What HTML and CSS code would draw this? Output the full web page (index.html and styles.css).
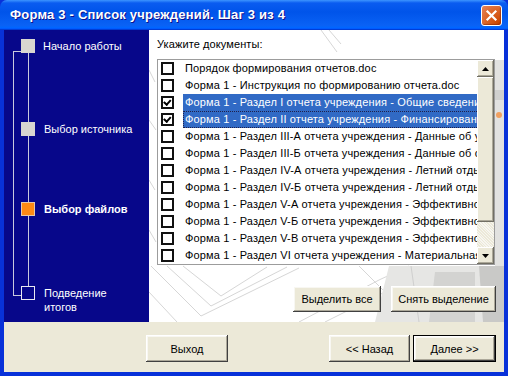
FILE: index.html
```html
<!DOCTYPE html>
<html lang="ru">
<head>
<meta charset="utf-8">
<title>Форма 3</title>
<link rel="stylesheet" href="styles.css">
</head>
<body>
<div class="window">
  <div class="titlebar">
    <span class="title">Форма 3 - Список учреждений. Шаг 3 из 4</span>
    <button class="close" aria-label="Закрыть">
      <svg width="13" height="13" viewBox="0 0 13 13"><path d="M2.5 2.5 L10.5 10.5 M10.5 2.5 L2.5 10.5" stroke="#fff" stroke-width="2.2" stroke-linecap="square"/></svg>
    </button>
  </div>
  <div class="frame">
    <div class="main">
      <aside class="steps">
        <svg class="rails" width="145" height="292" viewBox="0 0 145 292">
          <path d="M24.5 22 V262 M9.5 21.5 V265.5 M9 21.5 H17 M9 265.5 H17" stroke="#c9c9dd" stroke-width="1" fill="none"/>
        </svg>
        <div class="step s1"><span class="box done"></span><span class="label">Начало работы</span></div>
        <div class="step s2"><span class="box done"></span><span class="label">Выбор источника</span></div>
        <div class="step s3"><span class="box current"></span><span class="label bold">Выбор файлов</span></div>
        <div class="step s4"><span class="box todo"></span><span class="label">Подведение<br>итогов</span></div>
      </aside>
      <section class="content">
        <svg class="backdrop" width="355" height="292" viewBox="0 0 355 292">
          <g stroke="#d6d6d6" stroke-width="1" fill="none">
            <path d="M172 0 L188 22"/>
            <path d="M180 0 L192 14"/>
            <path d="M0 40 L6 52 M0 90 L7 100 M0 150 L6 160 M0 200 L7 212"/>
            <path d="M2 236 L52 286 L150 238"/>
            <path d="M18 236 L62 276 L138 237"/>
            <path d="M34 236 L72 266 L118 237"/>
            <path d="M0 262 L28 292"/>
            <path d="M150 292 L230 250 L260 236"/>
            <path d="M176 292 L236 262"/>
            <path d="M210 236 L236 262"/>
          </g>
          <path d="M240 236 H355 V292 H226 Z" fill="#e6e6e4"/>
          <path d="M262 236 L270 292" stroke="#cfcfcf" fill="none"/>
          <path d="M286 242 H326 V292 H280 Z" fill="#d3d3d1"/>
          <path d="M330 236 H355 V292 H334 Z" fill="#c9c9c7"/>
          <path d="M346 30 H355 V236 H346 Z" fill="#e2e2e0"/>
          <path d="M346 60 H355 V70 H346 Z" fill="#d0d0ce"/>
          <circle cx="350" cy="85" r="3" fill="#f0a060"/>
        </svg>
        <div class="prompt">Укажите документы:</div>
        <div class="listbox">
          <div class="items">
            <div class="row"><span class="cb"></span><span class="text">Порядок формирования отчетов.doc</span></div>
            <div class="row"><span class="cb"></span><span class="text">Форма 1 - Инструкция по формированию отчета.doc</span></div>
            <div class="row selected"><span class="cb checked"></span><span class="text">Форма 1 - Раздел I отчета учреждения - Общие сведения</span></div>
            <div class="row selected focus"><span class="cb checked"></span><span class="text">Форма 1 - Раздел II отчета учреждения - Финансирование</span></div>
            <div class="row"><span class="cb"></span><span class="text">Форма 1 - Раздел III-А отчета учреждения - Данные об учреждении</span></div>
            <div class="row"><span class="cb"></span><span class="text">Форма 1 - Раздел III-Б отчета учреждения - Данные об отделениях</span></div>
            <div class="row"><span class="cb"></span><span class="text">Форма 1 - Раздел IV-А отчета учреждения - Летний отдых</span></div>
            <div class="row"><span class="cb"></span><span class="text">Форма 1 - Раздел IV-Б отчета учреждения - Летний отдых</span></div>
            <div class="row"><span class="cb"></span><span class="text">Форма 1 - Раздел V-А отчета учреждения - Эффективность</span></div>
            <div class="row"><span class="cb"></span><span class="text">Форма 1 - Раздел V-Б отчета учреждения - Эффективность</span></div>
            <div class="row"><span class="cb"></span><span class="text">Форма 1 - Раздел V-В отчета учреждения - Эффективность</span></div>
            <div class="row"><span class="cb"></span><span class="text">Форма 1 - Раздел VI отчета учреждения - Материальная база</span></div>
          </div>
          <div class="scrollbar">
            <div class="sb-btn"><svg width="7" height="4" viewBox="0 0 7 4"><path d="M3.5 0 L7 4 H0 Z" fill="#000"/></svg></div>
            <div class="sb-thumb"></div>
            <div class="sb-track"></div>
            <div class="sb-btn"><svg width="7" height="4" viewBox="0 0 7 4"><path d="M0 0 H7 L3.5 4 Z" fill="#000"/></svg></div>
          </div>
        </div>
        <div class="sel-buttons">
          <button class="btn w88">Выделить все</button>
          <button class="btn w105">Снять выделение</button>
        </div>
      </section>
    </div>
    <div class="footer">
      <button class="btn w82">Выход</button>
      <div class="nav">
        <button class="btn w81">&lt;&lt; Назад</button>
        <button class="btn w83 default">Далее &gt;&gt;</button>
      </div>
    </div>
  </div>
</div>
</body>
</html>
```

FILE: styles.css
```css
* { box-sizing: border-box; }
html, body { margin: 0; padding: 0; background: #fff; }
body { font-family: "Liberation Sans", Arial, sans-serif; font-size: 11px; color: #000; }

.window {
  width: 508px;
  height: 376px;
  display: flex;
  flex-direction: column;
  background: #0831d9;
}

.titlebar {
  height: 30px;
  flex: none;
  display: flex;
  align-items: center;
  justify-content: space-between;
  padding: 0 6px 0 10px;
  border-radius: 7px 7px 0 0;
  background: linear-gradient(180deg, #3d95ff 0%, #0a5cf0 10%, #0054ea 40%, #0a62f5 85%, #0066ff 92%, #005bff 95%, #003dd7 96%, #003dd7 100%);
}
.title {
  color: #fff;
  font-weight: bold;
  font-size: 13px;
  letter-spacing: 0.2px;
  text-shadow: 1px 1px #0f1089;
  padding-bottom: 1px;
}
.close {
  width: 21px;
  height: 21px;
  padding: 0;
  border: 1px solid #fff;
  border-radius: 3px;
  display: flex;
  align-items: center;
  justify-content: center;
  background: radial-gradient(circle at 90% 90%, #cc4600 0%, #dc6527 55%, #e5845d 100%);
  box-shadow: inset -1px -1px 1px rgba(120,30,0,0.5);
}

.frame {
  flex: 1;
  display: flex;
  flex-direction: column;
  margin: 0 4px 4px 4px;
  background: #ece9d8;
}

.main {
  height: 292px;
  display: flex;
}

.steps {
  width: 145px;
  flex: none;
  background: #07078a;
  position: relative;
  padding-top: 9px;
  display: flex;
  flex-direction: column;
}
.rails { position: absolute; left: 0; top: 0; }
.step {
  position: relative;
  display: flex;
  align-items: flex-start;
  padding-left: 17px;
  color: #fff;
  line-height: 14px;
}
.s2 { margin-top: 69px; }
.s3 { margin-top: 66px; }
.s4 { margin-top: 70px; }
.box {
  width: 14px;
  height: 14px;
  flex: none;
}
.box.done { background: #d8d6d0; }
.box.current { background: #ff8a14; border: 1px solid #e8c8a8; }
.box.todo { background: #07078a; border: 1px solid #e8e8f0; }
.label { margin-left: 9px; white-space: nowrap; }
.label.bold { font-weight: bold; }
.s1 .label { margin-left: 8px; }

.content {
  flex: 1;
  background: #fff;
  position: relative;
  padding: 8px 8px 0 8px;
  display: flex;
  flex-direction: column;
}
.backdrop { position: absolute; left: 0; top: 0; }
.prompt {
  position: relative;
  line-height: 13px;
  height: 13px;
  margin-bottom: 8px;
  letter-spacing: 0.1px;
}
.listbox {
  position: relative;
  width: 338px;
  height: 206px;
  border: 1px solid #9c9c9c;
  background: #fff;
  display: flex;
}
.items {
  flex: 1;
  overflow: hidden;
}
.row {
  height: 17px;
  display: flex;
  align-items: center;
  padding-left: 3px;
  white-space: nowrap;
}
.cb {
  width: 13px;
  height: 13px;
  flex: none;
  border: 2px solid #111;
  background: #fff;
  position: relative;
}
.cb.checked::after {
  content: "";
  position: absolute;
  width: 5px;
  height: 3px;
  border-left: 2px solid #000;
  border-bottom: 2px solid #000;
  transform: rotate(-48deg);
  transform-origin: 30% 70%;
  top: 2px;
  left: 2px;
}
.text {
  margin-left: 9px;
  padding-left: 2px;
  height: 17px;
  line-height: 17px;
  flex: 1;
  letter-spacing: 0.15px;
}
.row.selected .text { background: #316ac5; color: #fff; }
.row.focus .text { outline: 1px dotted #20204a; outline-offset: -1px; }

.scrollbar {
  width: 17px;
  flex: none;
  display: flex;
  flex-direction: column;
  background: #f4f3ee;
}
.sb-btn {
  height: 17px;
  flex: none;
  display: flex;
  align-items: center;
  justify-content: center;
  background: #ece9d8;
  box-shadow: inset -1px -1px #716f64, inset 1px 1px #fff, inset -2px -2px #aca899;
}
.sb-thumb {
  height: 145px;
  flex: none;
  background: #ece9d8;
  box-shadow: inset -1px -1px #716f64, inset 1px 1px #fff, inset -2px -2px #aca899;
}
.sb-track {
  flex: 1;
  background-color: #f7f6f1;
  background-image: repeating-linear-gradient(45deg, #ece9d8 0 1px, transparent 1px 2px);
}

.sel-buttons {
  position: relative;
  display: flex;
  justify-content: flex-end;
  gap: 10px;
  margin-top: 21px;
}

.btn {
  height: 26px;
  padding: 0;
  border: none;
  font-family: "Liberation Sans", Arial, sans-serif;
  font-size: 11px;
  color: #000;
  background: #ece9d8;
  box-shadow: inset -1px -1px #404040, inset 1px 1px #fff, inset -2px -2px #aca899, inset 2px 2px #f8f7f2;
}
.btn.default {
  border: 1px solid #000;
}
.w88 { width: 88px; }
.w105 { width: 105px; }
.w82 { width: 82px; height: 27px; }
.w81 { width: 81px; height: 27px; }
.w83 { width: 83px; height: 27px; }

.footer {
  flex: 1;
  display: flex;
  justify-content: space-between;
  align-items: flex-start;
  padding: 13px 8px 0 142px;
}
.nav { display: flex; gap: 3px; }
```
